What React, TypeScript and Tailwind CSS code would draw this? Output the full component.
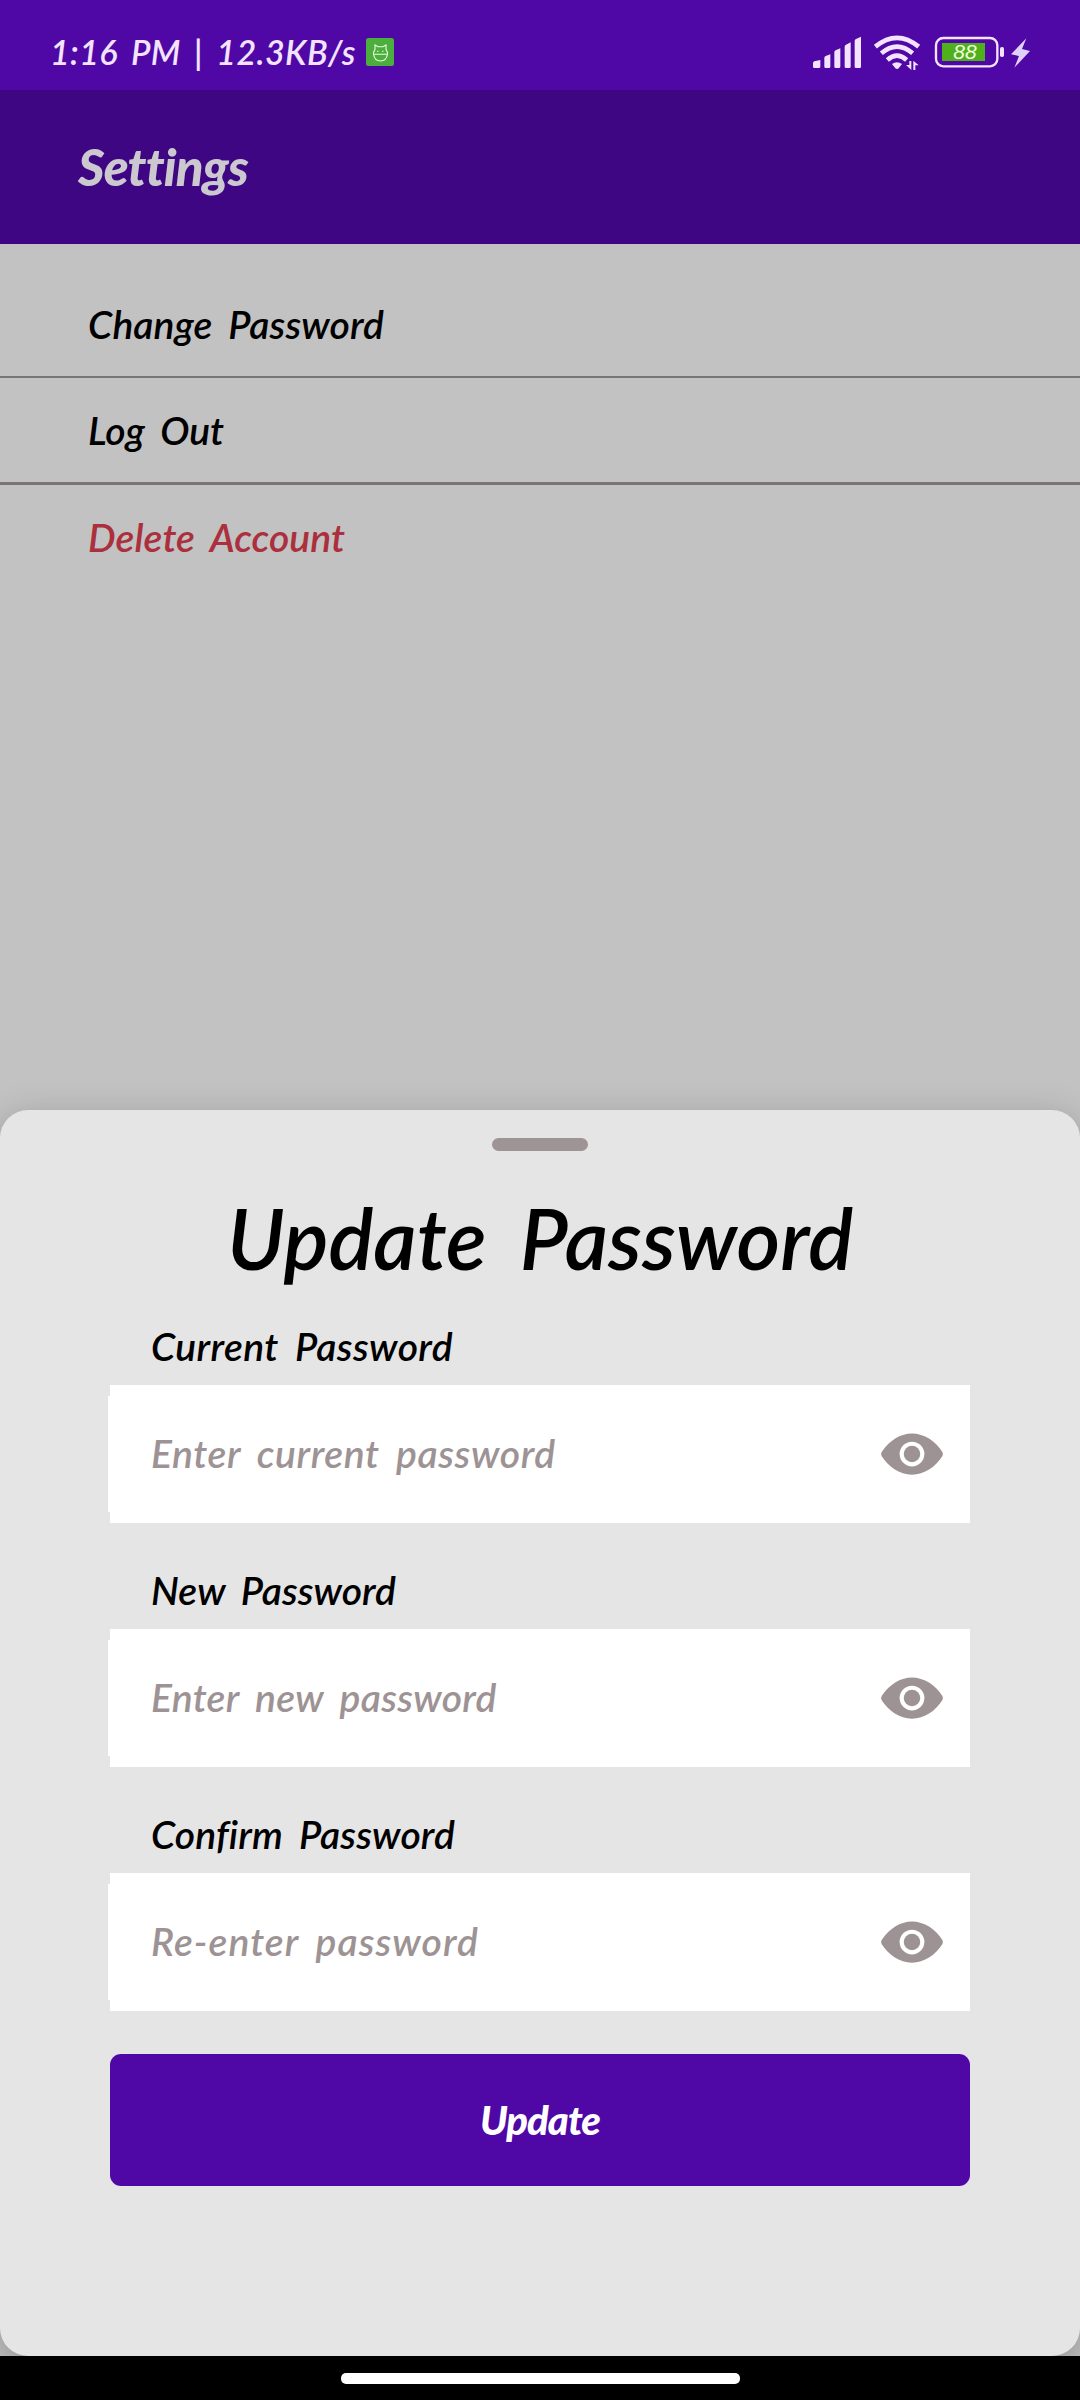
import { IoEye } from "react-icons/io5";

function StatusIcons() {
  return (
    <svg className="h-[90px] w-[270px]" viewBox="90 -30 810 270" fill="#f3e3ff">
      <path d="M99 160q0-4 4-6l18-4v20q0 4-4 4h-14q-4 0-4-4zM133 144q0-4 4-6l14-5v37q0 4-4 4h-10q-4 0-4-4zM163 127q0-4 4-6l14-6v55q0 4-4 4h-10q-4 0-4-4zM194 110q0-4 4-6l14-7v73q0 4-4 4h-10q-4 0-4-4zM224 93q0-4 4-6l15-7v90q0 4-4 4h-11q-4 0-4-4z" />
      <g fill="none" stroke="#f3e3ff" strokeWidth="14">
        <path d="M286 110Q351 57 416 110" />
        <path d="M304 130Q351 90 398 130" />
        <path d="M322 150Q351 124 380 150" />
      </g>
      <path d="M336 162q15-11 30 0l-10 13q-5 4-10 0z" />
      <path d="M388 153h6v27l-16-15h10zM400 180v-28l16 14h-10v14z" />
      <rect x="468" y="84" width="184" height="85" rx="22" fill="none" stroke="#f3e3ff" strokeWidth="7" />
      <rect x="486" y="99" width="129" height="54" fill="#4fb01c" />
      <rect x="660" y="111" width="12" height="30" rx="5" />
      <path d="M739 85l-46 48 24 5-14 35 47-50-24-6z" fill="#e0d0fb" />
      <text
        x="520"
        y="148"
        textLength="70"
        lengthAdjust="spacingAndGlyphs"
        className="font-['Liberation_Sans'] text-[58px] font-medium italic"
        fill="#efffe0"
      >
        88
      </text>
    </svg>
  );
}

function BadgeIcon() {
  return (
    <svg className="ml-[10px] h-7 w-7" viewBox="0 0 28 28">
      <rect width="28" height="28" rx="2.5" fill="#4cae3c" />
      <g fill="none" stroke="#e9ffdf" strokeWidth="1.1">
        <path d="M9 11.500V7l3 1.800h5L20 7v4.500l1.500 3v1.500q-1 7-7 7t-7-7v-1.500zM7.500 16.300h14" />
        <path d="M11 13.300h1.500M16 13.300h1.500" />
      </g>
    </svg>
  );
}

const fields = [
  {
    label: "Current Password",
    hint: "Enter current password",
    labelSpacing: "tracking-[0.4px]",
    hintSpacing: "tracking-[0.6px]",
  },
  {
    label: "New Password",
    hint: "Enter new password",
    labelSpacing: "tracking-[0.03px]",
    hintSpacing: "tracking-[0.3px]",
  },
  {
    label: "Confirm Password",
    hint: "Re-enter password",
    labelSpacing: "tracking-[0.15px]",
    hintSpacing: "tracking-[1.07px]",
  },
];

export default function App() {
  return (
    <div className="relative flex h-[2400px] w-[1080px] flex-col overflow-hidden bg-[#c2c2c2] font-['Lato',sans-serif] font-semibold italic text-black [font-variant-ligatures:none]">
      <div className="flex h-[90px] items-center justify-between bg-[#4f08a6]">
        <div className="flex items-center pl-[50px] pt-[14px] text-[34px] leading-[40px] tracking-[0.4px] text-[#f3e3ff] [word-spacing:5px]">
          <span className="whitespace-pre">1:16 PM | 12.3KB/s</span>
          <BadgeIcon />
        </div>
        <StatusIcons />
      </div>
      <header className="flex h-[154px] items-center bg-[#3e0682] pl-[78px] text-[51px] font-black tracking-[-0.8px] text-[#cbc8cf]">
        <h2>Settings</h2>
      </header>
      <nav className="flex flex-col pt-7 text-[39px] leading-[48px] [word-spacing:7px]">
        <div className="flex h-[106px] items-center border-b-2 border-[#7a7575] pl-[88px] tracking-[0.1px]">Change Password</div>
        <div className="flex h-[107px] items-center border-b-3 border-[#7a7575] pl-[88px] tracking-[-0.1px]">Log Out</div>
        <div className="flex h-[104px] items-center pl-[88px] tracking-[0.06px] text-[#ab2f3d]">Delete Account</div>
      </nav>

      <section className="absolute inset-x-0 top-[1110px] flex h-[1246px] flex-col items-center rounded-[28px] bg-[#e5e5e5] shadow-[0_10px_36px_rgba(0,0,0,0.25)]">
        <div className="mt-7 h-[13px] w-[96px] rounded-full bg-[#9f9495]" />
        <h1 className="mt-[37px] text-[84px] leading-[100px] [word-spacing:14px]">Update Password</h1>
        <form className="-mt-[9px] flex w-[860px] flex-col text-[39px] leading-[48px] [word-spacing:7px]">
          {fields.map((f) => (
            <div key={f.label} className="flex flex-col pt-[43px]">
              <label className={`pb-[15px] pl-[41px] ${f.labelSpacing}`}>{f.label}</label>
              <div className="relative flex h-[138px] items-center justify-between bg-white pl-[41px] pr-[25px] text-[#9e9394]">
                <span className="absolute -left-[2px] top-[11px] h-[116px] w-[2px] bg-white" />
                <span className={`-mt-[2px] ${f.hintSpacing}`}>{f.hint}</span>
                <IoEye className="h-[66px] w-[66px]" />
              </div>
            </div>
          ))}
          <button
            type="button"
            className="mt-[43px] h-[132px] rounded-[11px] bg-[#4f08a6] text-[40px] font-black tracking-[-0.95px] text-white italic"
          >
            Update
          </button>
        </form>
      </section>
      <div className="absolute inset-x-0 bottom-0 flex h-[44px] items-center justify-center bg-black">
        <div className="h-[11px] w-[399px] rounded-[5px] bg-white" />
      </div>
    </div>
  );
}
